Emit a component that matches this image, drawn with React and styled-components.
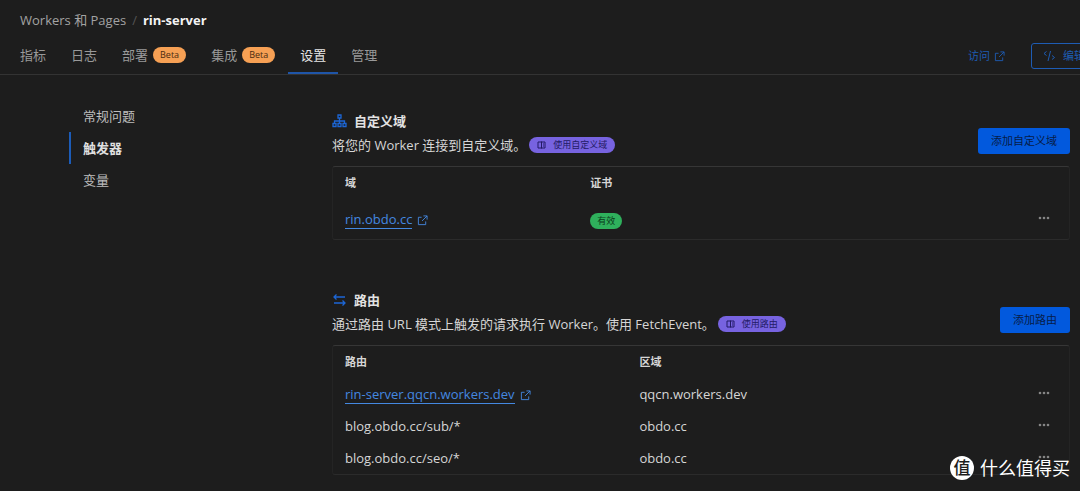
import React from 'react';
import styled, { createGlobalStyle } from 'styled-components';

const tabs = [
  { label: '指标' },
  { label: '日志' },
  { label: '部署', beta: true },
  { label: '集成', beta: true },
  { label: '设置', active: true },
  { label: '管理' },
];

const sideLinks = [
  { label: '常规问题' },
  { label: '触发器', active: true },
  { label: '变量' },
];

const routes = [
  { route: 'rin-server.qqcn.workers.dev', zone: 'qqcn.workers.dev', link: true },
  { route: 'blog.obdo.cc/sub/*', zone: 'obdo.cc' },
  { route: 'blog.obdo.cc/seo/*', zone: 'obdo.cc' },
];

const ExternalIcon = ({ size = 11 }) => (
  <Icon width={size} height={size} viewBox="0 0 12 12" aria-hidden="true">
    <path d="M5 2.5H1.5v8h8V7M7 1h4v4M11 1 5.5 6.5" />
  </Icon>
);

const CodeIcon = () => (
  <Icon width="13" height="12" viewBox="0 0 13 12" aria-hidden="true">
    <path d="M3.5 1.5 1 3.5l2.500 2M7.500 1 5 11M9 5.500l2.500 2-2.500 2" />
  </Icon>
);

const SitemapIcon = () => (
  <Icon width="15" height="14" viewBox="0 0 15 14" $stroke={1.3} aria-hidden="true">
    <path d="M6 1h3v3H6zM7.5 4v5.5M2.5 9.5V7h10v2.5M1 9.5h3v3H1zM6 9.5h3v3H6zM11 9.5h3v3h-3z" />
  </Icon>
);

const RoutesIcon = () => (
  <Icon width="15" height="14" viewBox="0 0 15 14" $stroke={1.3} aria-hidden="true">
    <path d="M13 4H2M4.5 1.5 2 4l2.5 2.5M2 10h11M10.5 7.5 13 10l-2.5 2.5" />
  </Icon>
);

const BookIcon = () => (
  <Icon width="9" height="8" viewBox="0 0 9 8" aria-hidden="true">
    <path d="M4.5 1H1v6h3.5M4.5 .5v7M4.5 1H8v6H4.5M6 3h1M6 5h1" />
  </Icon>
);

const RowMenu = () => (
  <MenuButton type="button" aria-label="更多">
    <svg width="12" height="4" viewBox="0 0 12 4" aria-hidden="true">
      <circle cx="2" cy="2" r="1.3" />
      <circle cx="6" cy="2" r="1.3" />
      <circle cx="10" cy="2" r="1.3" />
    </svg>
  </MenuButton>
);

const App = () => {
  return (
    <>
      <GlobalStyle />
      <Page>
        <Header>
          <Breadcrumb aria-label="breadcrumb">
            <CrumbLink href="#workers">Workers 和 Pages</CrumbLink>
            <Slash>/</Slash>
            <strong>rin-server</strong>
          </Breadcrumb>
          <Toolbar>
            <Tabs>
              {tabs.map(({ label, beta, active }) => (
                <Tab key={label} href="#tab" $active={active}>
                  {label}
                  {beta && <Beta>Beta</Beta>}
                </Tab>
              ))}
            </Tabs>
            <Actions>
              <VisitLink href="#visit">
                访问
                <ExternalIcon />
              </VisitLink>
              <EditButton type="button">
                <CodeIcon />
                编辑
              </EditButton>
            </Actions>
          </Toolbar>
        </Header>

        <Main>
          <SideNav>
            {sideLinks.map(({ label, active }) => (
              <SideLink key={label} href="#section" $active={active}>
                {label}
              </SideLink>
            ))}
          </SideNav>

          <Content>
            <section>
              <SectionHead>
                <div>
                  <Title>
                    <SitemapIcon />
                    自定义域
                  </Title>
                  <Description>
                    将您的 Worker 连接到自定义域。
                    <DocsLink href="#docs-domains">
                      <BookIcon />
                      使用自定义域
                    </DocsLink>
                  </Description>
                </div>
                <AddButton type="button">添加自定义域</AddButton>
              </SectionHead>
              <TableBox>
                <Table $first="33.33%" $rowHeight={40}>
                  <thead>
                    <tr>
                      <th>域</th>
                      <th>证书</th>
                      <td />
                    </tr>
                  </thead>
                  <tbody>
                    <tr>
                      <td>
                        <HostLink href="#rin.obdo.cc">
                          <span>rin.obdo.cc</span>
                          <ExternalIcon />
                        </HostLink>
                      </td>
                      <td>
                        <Status>有效</Status>
                      </td>
                      <td>
                        <RowMenu />
                      </td>
                    </tr>
                  </tbody>
                </Table>
              </TableBox>
            </section>

            <section>
              <SectionHead>
                <div>
                  <Title>
                    <RoutesIcon />
                    路由
                  </Title>
                  <Description>
                    通过路由 URL 模式上触发的请求执行 Worker。使用 FetchEvent。
                    <DocsLink href="#docs-routes">
                      <BookIcon />
                      使用路由
                    </DocsLink>
                  </Description>
                </div>
                <AddButton type="button">添加路由</AddButton>
              </SectionHead>
              <TableBox>
                <Table $first="40%" $rowHeight={32}>
                  <thead>
                    <tr>
                      <th>路由</th>
                      <th>区域</th>
                      <td />
                    </tr>
                  </thead>
                  <tbody>
                    {routes.map(({ route, zone, link }) => (
                      <tr key={route}>
                        <td>
                          {link ? (
                            <HostLink href="#route">
                              <span>{route}</span>
                              <ExternalIcon />
                            </HostLink>
                          ) : (
                            route
                          )}
                        </td>
                        <td>{zone}</td>
                        <td>
                          <RowMenu />
                        </td>
                      </tr>
                    ))}
                  </tbody>
                </Table>
              </TableBox>
            </section>
          </Content>
        </Main>

        <Watermark>
          <Seal>值</Seal>
          什么值得买
        </Watermark>
      </Page>
    </>
  );
};

export default App;

const GlobalStyle = createGlobalStyle`
  * {
    box-sizing: border-box;
  }

  body {
    margin: 0;
    background: #1d1d1d;
    color: #d6d6d6;
    font: 13px/20px 'Open Sans', 'Noto Sans CJK SC', sans-serif;
  }

  a {
    color: inherit;
    text-decoration: none;
  }

  button {
    font: inherit;
    cursor: pointer;
  }
`;

const Icon = styled.svg`
  flex: none;
  fill: none;
  stroke: currentColor;
  stroke-width: ${({ $stroke = 1 }) => $stroke};
`;

const Page = styled.div`
  position: relative;
  overflow: hidden;
  padding-bottom: 16px;
`;

const Header = styled.header`
  border-bottom: 1px solid #333;
`;

const Breadcrumb = styled.nav`
  display: flex;
  gap: 6px;
  padding: 10px 20px 8px;

  strong {
    color: #f4f4f4;
  }
`;

const CrumbLink = styled.a`
  color: #a3a3a3;
`;

const Slash = styled.span`
  color: #555;
`;

const Toolbar = styled.div`
  display: flex;
  justify-content: space-between;
  height: 36px;
`;

const Tabs = styled.nav`
  display: flex;
  gap: 1px;
  padding-left: 8px;
`;

const Tab = styled.a`
  display: flex;
  align-items: center;
  gap: 5px;
  padding: 0 12px;
  border-bottom: 2px solid ${({ $active }) => ($active ? '#1f55a8' : 'transparent')};
  color: ${({ $active }) => ($active ? '#e6e6e6' : '#999')};
`;

const Beta = styled.span`
  padding: 0 7px;
  border-radius: 8px;
  background: #f6a054;
  color: #4a2a10;
  font-size: 9px;
  line-height: 16px;
`;

/* the edit button runs past the right edge of the window */
const Actions = styled.div`
  display: flex;
  flex: none;
  align-items: center;
  gap: 26px;
  margin-right: -17px;
  color: #1e5cb3;
  font-size: 11px;
`;

const VisitLink = styled.a`
  display: flex;
  align-items: center;
  gap: 4px;
`;

const EditButton = styled.button`
  display: flex;
  align-items: center;
  gap: 7px;
  height: 26px;
  padding: 0 11px;
  border: 1px solid #1e5cb3;
  border-radius: 3px;
  background: transparent;
  color: inherit;
`;

const Main = styled.main`
  display: grid;
  grid-template-columns: 263px 1fr;
  padding: 25px 10px 0 69px;
`;

const SideNav = styled.nav`
  display: flex;
  flex-direction: column;
`;

const SideLink = styled.a`
  padding: 6px 12px;
  border-left: 2px solid ${({ $active }) => ($active ? '#1c5cb8' : 'transparent')};
  color: ${({ $active }) => ($active ? '#e0e0e0' : '#bdbdbd')};
  font-weight: ${({ $active }) => ($active ? 700 : 400)};
`;

const Content = styled.div`
  display: flex;
  flex-direction: column;
  gap: 48px;
  padding-top: 9px;
`;

const SectionHead = styled.div`
  display: flex;
  align-items: flex-end;
  justify-content: space-between;
  margin-bottom: 9px;
`;

const Title = styled.h2`
  display: flex;
  align-items: center;
  gap: 7px;
  margin: 0;
  color: #e2e2e2;
  font-size: 13px;
  line-height: 24px;

  svg {
    color: #1c66d6;
  }
`;

const Description = styled.p`
  display: flex;
  align-items: center;
  gap: 3px;
  margin: 0;
  line-height: 24px;
`;

const DocsLink = styled.a`
  display: flex;
  align-items: center;
  gap: 7px;
  padding: 0 8px;
  border-radius: 8px;
  background: #7763e0;
  color: #231b66;
  font-size: 9px;
  line-height: 16px;
`;

const AddButton = styled.button`
  flex: none;
  margin-bottom: 3px;
  padding: 3px 13px;
  border: 0;
  border-radius: 3px;
  background: #0259dd;
  color: #071c48;
  font-size: 11px;
`;

const TableBox = styled.div`
  border: 1px solid #242424;
  border-top-color: #363636;
  border-bottom-color: #2b2b2b;
  border-radius: 3px;
`;

const Table = styled.table`
  width: 100%;
  border-collapse: collapse;
  table-layout: fixed;

  th,
  td {
    padding: 0 12px;
    text-align: left;
  }

  th {
    height: 32px;
    font-size: 11px;
  }

  th:first-child {
    width: ${({ $first }) => $first};
  }

  tbody td {
    height: ${({ $rowHeight }) => $rowHeight}px;
  }

  td:last-child {
    width: 80px;
    padding-right: 19px;
    line-height: 0;
    text-align: right;
  }
`;

const HostLink = styled.a`
  display: inline-flex;
  align-items: center;
  gap: 5px;
  color: #4488e0;

  span {
    border-bottom: 1px solid currentColor;
    line-height: 17px;
  }
`;

const Status = styled.span`
  display: inline-block;
  padding: 0 7px;
  border-radius: 8px;
  background: #2fb05c;
  color: #0b3a1b;
  font-size: 9px;
  line-height: 16px;
`;

const MenuButton = styled.button`
  padding: 0 0 2px;
  border: 0;
  background: transparent;
  vertical-align: middle;

  svg {
    display: block;
    fill: #858585;
  }
`;

const Watermark = styled.div`
  position: absolute;
  right: 10px;
  bottom: 11px;
  display: flex;
  align-items: center;
  gap: 6px;
  color: #fff;
  font-size: 18px;
  line-height: 24px;
  pointer-events: none;
`;

const Seal = styled.span`
  width: 24px;
  border-radius: 50%;
  background: #fff;
  color: #1d1d1d;
  font-size: 17px;
  font-weight: 500;
  text-align: center;
`;
